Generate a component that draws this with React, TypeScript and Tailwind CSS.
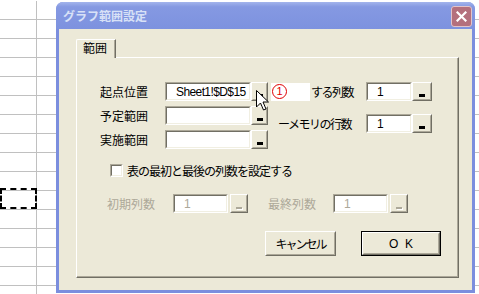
import React from "react";

const jp = "font-['Noto_Sans_CJK_JP','Liberation_Sans',sans-serif]";

function Field({ w, text, disabled }: { w: string; text?: string; disabled?: boolean }) {
  return (
    <div className={`${w} h-[19px] border border-t-[#aca899] border-l-[#aca899] border-r-white border-b-white`}>
      <div
        className={`flex h-full items-center border border-t-[#716f64] border-l-[#716f64] border-r-[#f1efe2] border-b-[#f1efe2] bg-white pl-[9px] font-['Liberation_Sans',sans-serif] text-[12px] leading-none tracking-[-0.6px] ${
          disabled ? "text-[#aca899]" : "text-black"
        }`}
      >
        {text}
      </div>
    </div>
  );
}

function PickButton({ w, disabled }: { w: string; disabled?: boolean }) {
  return (
    <div className={`${w} h-[19px] border border-t-white border-l-white border-r-[#716f64] border-b-[#716f64] bg-[#ece9d8]`}>
      <div className="flex h-full items-end justify-center border border-t-[#ece9d8] border-l-[#ece9d8] border-r-[#aca899] border-b-[#aca899] pb-[2px]">
        <div
          className={
            disabled
              ? "h-[2px] w-[6px] bg-[#aca899] shadow-[1px_1px_0_#ffffff]"
              : "h-[3px] w-[6px] bg-black"
          }
        />
      </div>
    </div>
  );
}

function Label({ className, children }: { className?: string; children: React.ReactNode }) {
  return <span className={`${jp} text-[12px] leading-none ${className ?? ""}`}>{children}</span>;
}

function PushButton({ w, isDefault, children }: { w: string; isDefault?: boolean; children: React.ReactNode }) {
  const face = (
    <div className="h-full border border-t-white border-l-white border-r-[#716f64] border-b-[#716f64]">
      <div className="flex h-full items-center justify-center border border-t-[#ece9d8] border-l-[#ece9d8] border-r-[#aca899] border-b-[#aca899]">
        {children}
      </div>
    </div>
  );
  return (
    <div className={`${w} h-[25px] bg-[#ece9d8] ${isDefault ? "border border-black" : ""}`}>{face}</div>
  );
}

export default function App() {
  const rows = Array.from({ length: 16 });

  return (
    <div className="relative h-[294px] w-[479px] overflow-hidden bg-white">
      {/* spreadsheet behind */}
      <div className="flex flex-col pt-px">
        {rows.map((_, i) => (
          <div key={i} className="flex h-[19px] border-b border-[#c0c0c0]">
            <div className="w-[37px] border-r border-[#c0c0c0]" />
            <div className="flex-1" />
          </div>
        ))}
      </div>
      <div className="absolute left-0 top-[188px] h-[21px] w-[37px] border-2 border-dashed border-black" />

      {/* dialog */}
      <div className="absolute left-[56px] top-[2px] flex h-[291px] w-[419px] flex-col rounded-t-[7px] bg-[#7b8ede]">
        <div className="flex h-[27px] items-start justify-between rounded-t-[7px] bg-[linear-gradient(to_bottom,#a3b4ec_0%,#8599e2_18%,#7d92df_100%)] pl-[7px] pr-[3px]">
          <span className={`${jp} mt-[8px] text-[12px] font-bold leading-none text-[#d8e1f7]`}>
            グラフ範囲設定
          </span>
          <div className="mt-[4px] flex h-[21px] w-[21px] items-center justify-center rounded-[3px] border border-[#e2c3c9] bg-[#b4707d]">
            <svg width="11" height="11" viewBox="0 0 11 11">
              <path d="M1.5 1.5 L9.5 9.5 M9.5 1.5 L1.5 9.5" stroke="#ffffff" strokeWidth="2.2" strokeLinecap="square" />
            </svg>
          </div>
        </div>

        <div className="mx-[3px] mb-[3px] flex-1 bg-[#ece9d8] pl-[17px] pt-[10px]">
          {/* tab */}
          <div className="flex">
            <div className="relative z-10 -mb-px flex h-[19px] w-[40px] justify-start rounded-tl-[2px] border border-b-0 border-t-white border-l-white border-r-[#716f64] bg-[#ece9d8] pl-[6px] pt-[2px] shadow-[inset_-1px_0_0_#aca899]">
              <Label className="text-black">範囲</Label>
            </div>
          </div>

          {/* panel */}
          <div className="h-[221px] w-[383px] border border-t-white border-l-white border-r-[#716f64] border-b-[#716f64] shadow-[inset_-1px_-1px_0_#aca899]">
            <div className="mt-[24px] flex pl-[23px]">
              <div className="flex flex-col gap-[5px]">
                <div className="flex items-center">
                  <Label className="w-[65px] text-black">起点位置</Label>
                  <Field w="w-[86px]" text="Sheet1!$D$15" />
                  <PickButton w="w-[17px]" />
                </div>
                <div className="flex items-center">
                  <Label className="w-[65px] text-black">予定範囲</Label>
                  <Field w="w-[86px]" />
                  <PickButton w="w-[17px]" />
                </div>
                <div className="flex items-center">
                  <Label className="w-[65px] text-black">実施範囲</Label>
                  <Field w="w-[86px]" />
                  <PickButton w="w-[17px]" />
                </div>
              </div>

              <div className="ml-[3px] flex flex-col">
                <div className="flex items-center">
                  <div className="flex h-[18px] w-[39px] items-center bg-white pl-[1px]">
                    <span className="flex h-[15px] w-[15px] items-center justify-center rounded-full border-[1.5px] border-[#e00000] font-['Liberation_Sans',sans-serif] text-[11px] leading-none text-[#e00000]">
                      1
                    </span>
                  </div>
                  <Label className="w-[56px] pl-px tracking-[-1.5px] text-black">する列数</Label>
                  <Field w="w-[46px]" text="1" />
                  <PickButton w="w-[20px]" />
                </div>
                <div className="mt-[13px] flex items-center">
                  <Label className="w-[95px] pl-[7px] tracking-[-1.5px] text-black">ーメモリの行数</Label>
                  <Field w="w-[46px]" text="1" />
                  <PickButton w="w-[20px]" />
                </div>
              </div>
            </div>

            <div className="mt-[15px] flex h-[13px] items-center pl-[33px]">
              <div className="h-[13px] w-[13px] border border-t-[#aca899] border-l-[#aca899] border-r-white border-b-white">
                <div className="h-full border border-t-[#716f64] border-l-[#716f64] border-r-[#f1efe2] border-b-[#f1efe2] bg-white" />
              </div>
              <Label className="ml-[4px] tracking-[-1px] text-black">表の最初と最後の列数を設定する</Label>
            </div>

            <div className="mt-[17px] flex items-center pl-[30px]">
              <Label className="w-[66px] text-[#aca899]">初期列数</Label>
              <Field w="w-[55px]" text="1" disabled />
              <div className="ml-[2px]">
                <PickButton w="w-[18px]" disabled />
              </div>
              <Label className="ml-[20px] w-[65px] text-[#aca899]">最終列数</Label>
              <Field w="w-[55px]" text="1" disabled />
              <div className="ml-[2px]">
                <PickButton w="w-[18px]" disabled />
              </div>
            </div>

            <div className="mt-[18px] flex pl-[188px]">
              <PushButton w="w-[71px]">
                <Label className="tracking-[-2px] text-black">キャンセル</Label>
              </PushButton>
              <div className="ml-[25px]">
                <PushButton w="w-[80px]" isDefault>
                  <span className="whitespace-pre font-['Liberation_Sans',sans-serif] text-[12px] leading-none text-black">
                    O  K
                  </span>
                </PushButton>
              </div>
            </div>
          </div>
        </div>
      </div>

      {/* mouse pointer */}
      <svg className="absolute left-[256px] top-[90px]" width="14" height="22" viewBox="0 0 14 22">
        <path
          d="M0.5 0.5 L0.5 17 L4.5 13 L7.5 20 L10 19 L7 12 L12.5 12 Z"
          fill="#ffffff"
          stroke="#000000"
          strokeWidth="1"
          strokeLinejoin="miter"
        />
      </svg>
    </div>
  );
}
